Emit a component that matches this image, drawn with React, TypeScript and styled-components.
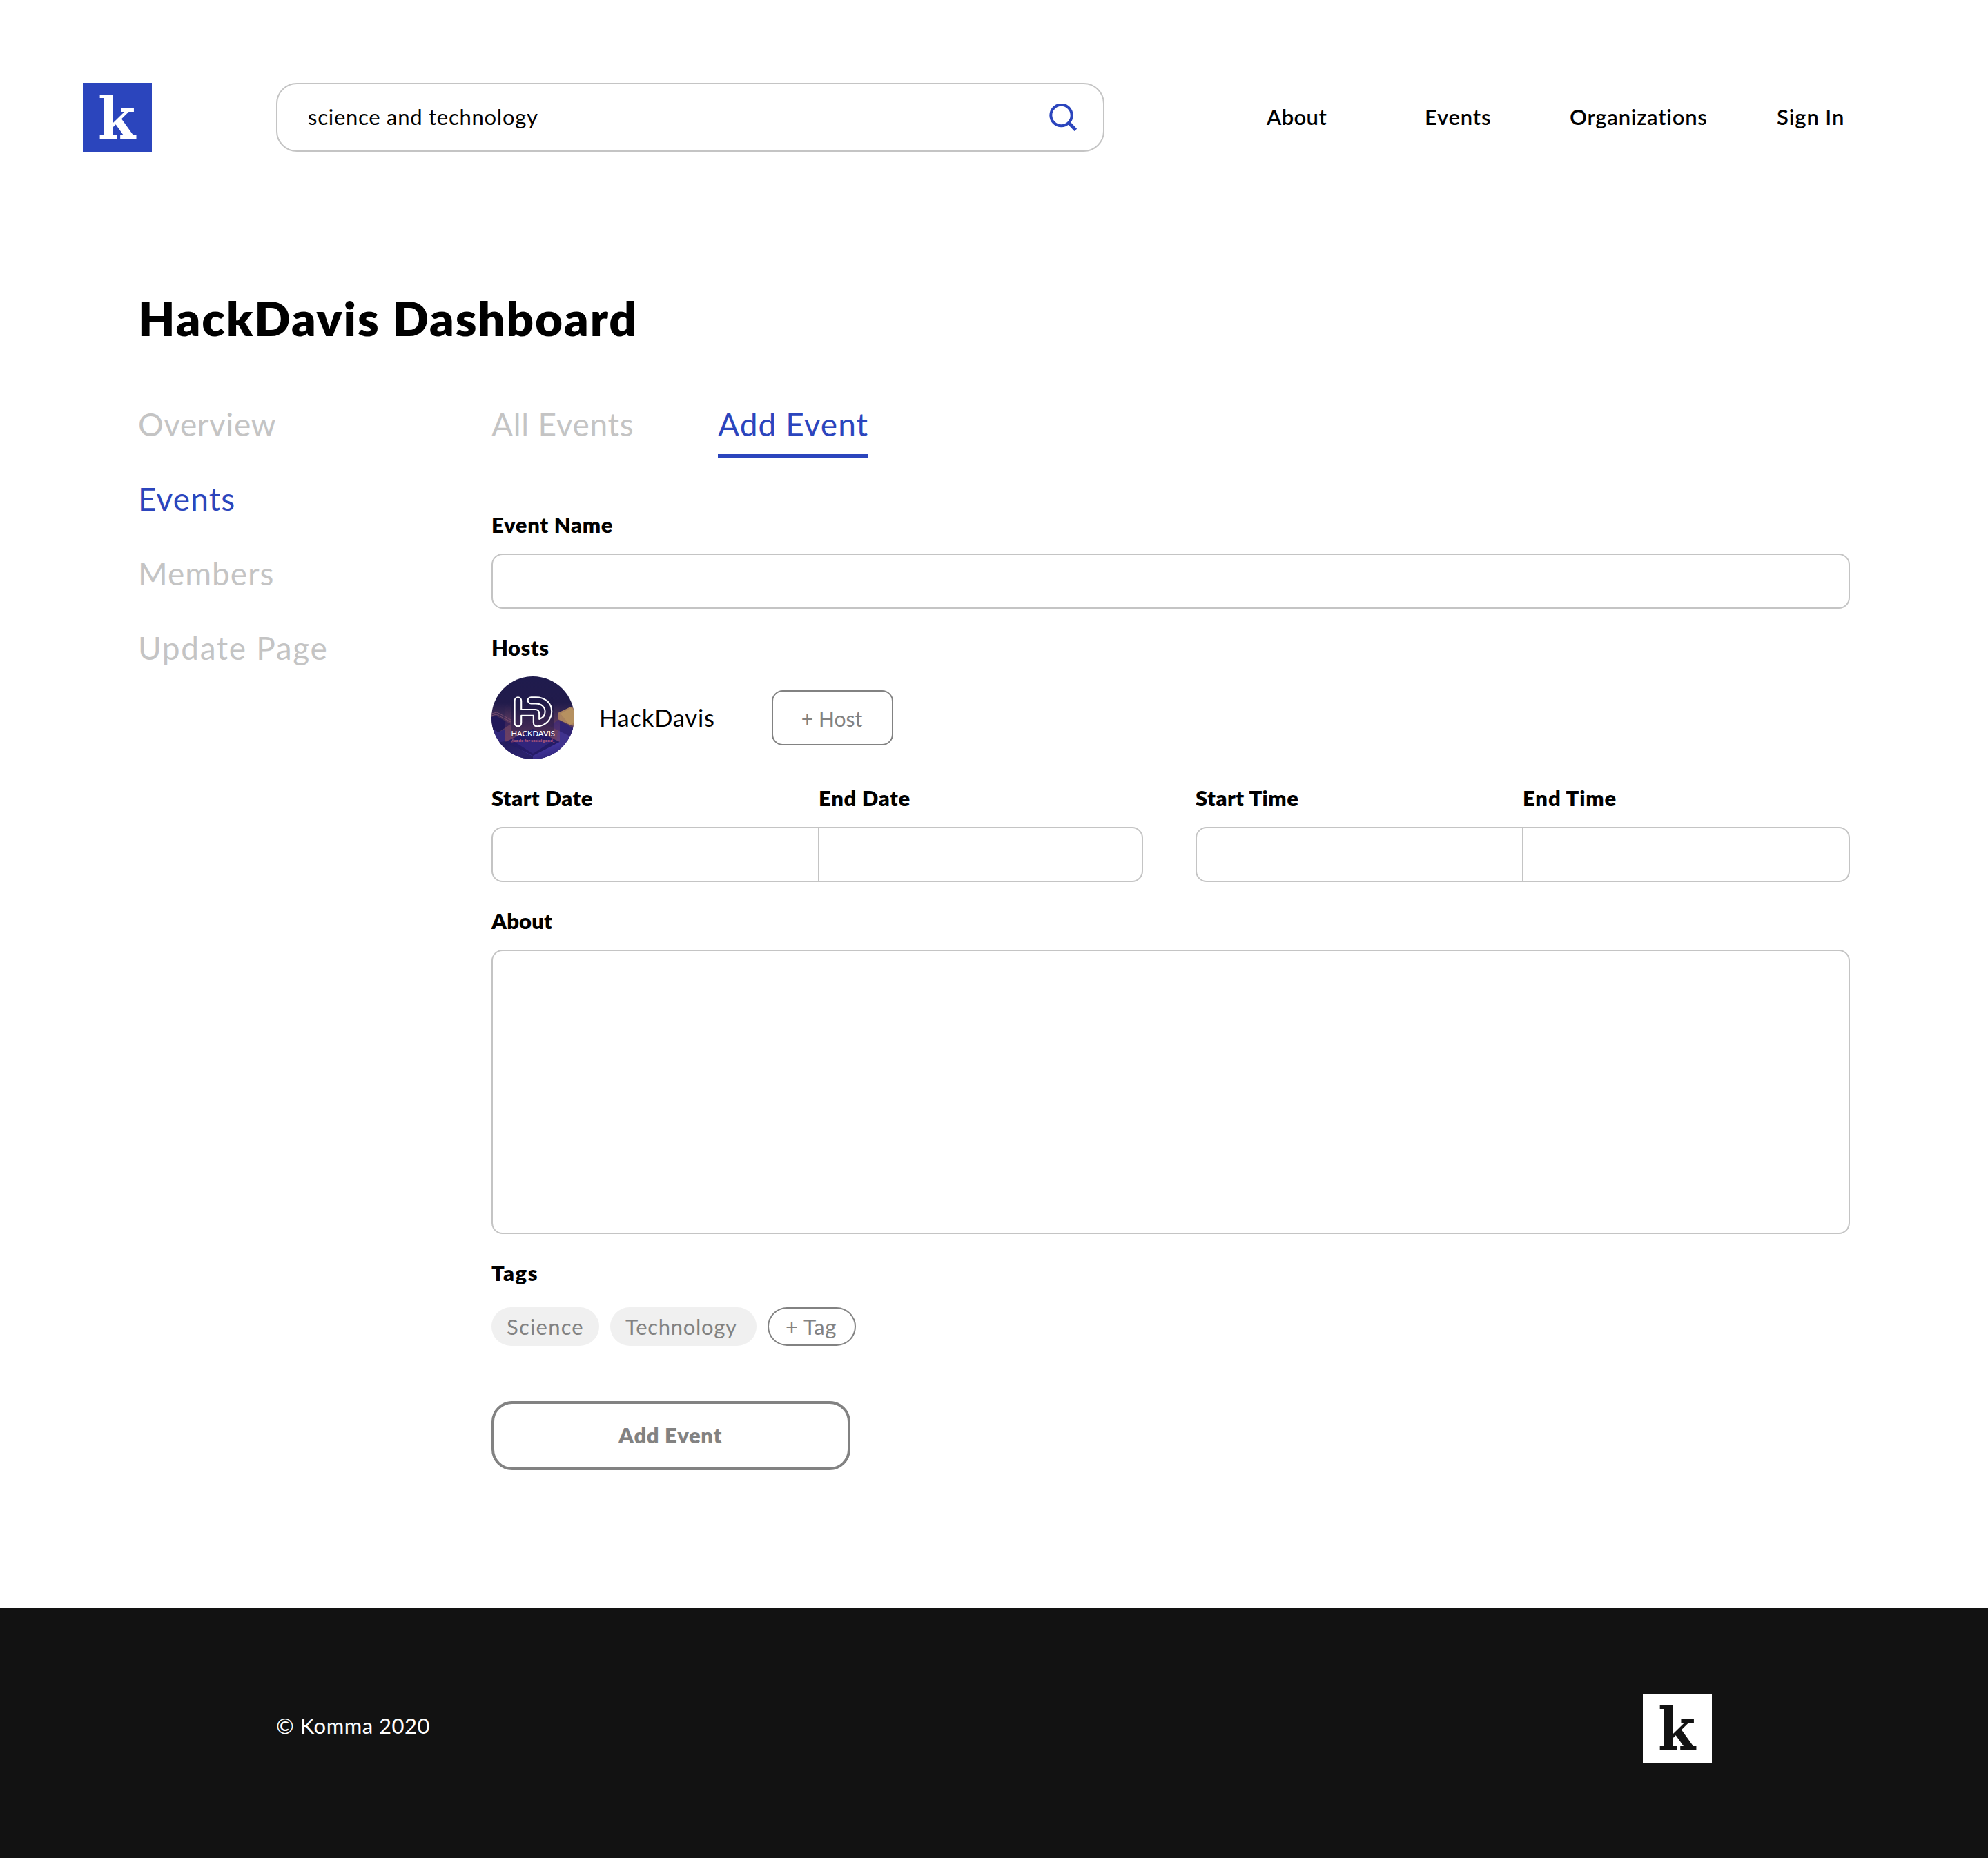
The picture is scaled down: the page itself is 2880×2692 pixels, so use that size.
import React from "react";
import styled, { createGlobalStyle } from "styled-components";

const blue = "#2b45bd";
const line = "#c4c4c4";
const grey = "#828282";

const GlobalStyle = createGlobalStyle`
  * { box-sizing: border-box; }
  body { margin: 0; background: #fff; color: #000; font-family: Lato, "Open Sans", sans-serif; }
  h1, p { margin: 0; }
  button, input, textarea { font: inherit; color: inherit; background: none; margin: 0; outline: none; }
`;

const Page = styled.div`
  width: 2880px;
  min-height: 2692px;
  display: flex;
  flex-direction: column;
`;

const Header = styled.header`
  height: 220px;
  padding: 120px 0 0 120px;
  display: flex;
`;

const LogoTile = styled.div<{ $bg: string; $fg: string }>`
  width: 100px;
  height: 100px;
  padding: 2px 1px 0 0;
  display: flex;
  justify-content: center;
  background: ${(p) => p.$bg};
  color: ${(p) => p.$fg};
  font: 700 84px/100px "DejaVu Serif", serif;
`;

const LogoLetter = styled.span`
  display: block;
  transform: scaleX(0.93);
`;

const SearchBox = styled.div`
  width: 1200px;
  height: 100px;
  margin-left: 180px;
  padding: 0 38px 0 44px;
  display: flex;
  align-items: center;
  justify-content: space-between;
  border: 2px solid ${line};
  border-radius: 30px;
`;

const SearchText = styled.span<{ $ls: number }>`
  font-size: 31px;
  line-height: 40px;
  padding-bottom: 3px;
  letter-spacing: ${(p) => p.$ls}px;
`;

const Nav = styled.nav`
  display: grid;
  grid-template-columns: 229px 210px 300px auto;
  align-items: center;
  margin-left: 235px;
  padding-bottom: 3px;
`;

const NavLink = styled.a<{ $ls: number }>`
  font-size: 31px;
  line-height: 40px;
  font-weight: 600;
  letter-spacing: ${(p) => p.$ls}px;
`;

const Title = styled.h1`
  height: 80px;
  margin: 200px 0 0 200px;
  font-size: 69px;
  line-height: 82px;
  font-weight: 800;
  letter-spacing: 1.9px;
`;

const Body = styled.main`
  display: grid;
  grid-template-columns: 512px 1968px;
  margin: 84px 0 200px 200px;
`;

const SideNav = styled.nav`
  display: flex;
  flex-direction: column;
  align-items: flex-start;
  gap: 48px;
  padding-top: 1px;
`;

const SideLink = styled.a<{ $active?: boolean; $ls: number }>`
  font-size: 46px;
  line-height: 60px;
  color: ${(p) => (p.$active ? blue : line)};
  letter-spacing: ${(p) => p.$ls}px;
`;

const Content = styled.section`
  display: flex;
  flex-direction: column;
  align-items: stretch;
`;

const Tabs = styled.div`
  display: grid;
  grid-template-columns: 328px 218px;
  margin-bottom: 76px;
`;

const Tab = styled.a<{ $active?: boolean; $ls: number }>`
  height: 80px;
  padding-top: 1px;
  font-size: 46px;
  line-height: 60px;
  white-space: nowrap;
  color: ${(p) => (p.$active ? blue : line)};
  border-bottom: 6px solid ${(p) => (p.$active ? blue : "transparent")};
  letter-spacing: ${(p) => p.$ls}px;
`;

const Form = styled.form`
  display: flex;
  flex-direction: column;
  gap: 36px;
`;

const Field = styled.div`
  display: flex;
  flex-direction: column;
`;

const Label = styled.label<{ $ls: number }>`
  display: block;
  height: 40px;
  margin-bottom: 22px;
  font-size: 31px;
  line-height: 40px;
  font-weight: 800;
  letter-spacing: ${(p) => p.$ls}px;
`;

const TextInput = styled.input`
  height: 80px;
  padding: 0 24px;
  border: 2px solid ${line};
  border-radius: 16px;
`;

const TextArea = styled.textarea`
  display: block;
  height: 412px;
  padding: 24px;
  border: 2px solid ${line};
  border-radius: 16px;
  resize: none;
`;

const HostRow = styled.div`
  height: 120px;
  display: flex;
  align-items: center;
`;

const HostName = styled.span<{ $ls: number }>`
  width: 250px;
  margin-left: 36px;
  font-size: 34.5px;
  line-height: 40px;
  letter-spacing: ${(p) => p.$ls}px;
`;

const HostButton = styled.button<{ $ls: number }>`
  width: 176px;
  height: 80px;
  padding: 2px 2px 0 0;
  border: 2px solid ${grey};
  border-radius: 16px;
  color: ${grey};
  font-size: 30px;
  letter-spacing: ${(p) => p.$ls}px;
`;

const RangeRow = styled.div`
  display: flex;
  justify-content: space-between;
`;

const Range = styled.div<{ $width: number }>`
  width: ${(p) => p.$width}px;
  display: grid;
  grid-template-columns: 474px 1fr;
`;

const RangeInput = styled.input<{ $end?: boolean }>`
  width: 100%;
  height: 80px;
  padding: 0 24px;
  border: 2px solid ${line};
  border-right-width: ${(p) => (p.$end ? 2 : 0)}px;
  border-radius: ${(p) => (p.$end ? "0 16px 16px 0" : "16px 0 0 16px")};
`;

const RangeEnd = styled(Field)`
  input { width: calc(100% + 1px); margin-left: -1px; }
`;

const TagRow = styled.div`
  display: flex;
  gap: 16px;
  margin-top: 8px;
`;

const Tag = styled.span<{ $width: number; $pad: number; $ls: number; $outline?: boolean }>`
  width: ${(p) => p.$width}px;
  height: 56px;
  padding-left: ${(p) => p.$pad}px;
  border-radius: 28px;
  background: ${(p) => (p.$outline ? "transparent" : "#f0f0f0")};
  box-shadow: ${(p) => (p.$outline ? `inset 0 0 0 2px ${grey}` : "none")};
  color: ${grey};
  font-size: 31px;
  line-height: 57px;
  white-space: nowrap;
  letter-spacing: ${(p) => p.$ls}px;
`;

const Submit = styled.button<{ $ls: number }>`
  width: 520px;
  height: 100px;
  margin-top: 44px;
  padding: 0 2px 3px 0;
  border: 4px solid ${grey};
  border-radius: 30px;
  color: ${grey};
  font-size: 31px;
  font-weight: 800;
  letter-spacing: ${(p) => p.$ls}px;
`;

const Footer = styled.footer`
  height: 362px;
  padding: 124px 400px 0;
  display: flex;
  justify-content: space-between;
  background: #121212;
  color: #fff;
`;

const Copyright = styled.p<{ $ls: number }>`
  margin-top: 26px;
  font-size: 31px;
  line-height: 40px;
  letter-spacing: ${(p) => p.$ls}px;
`;

const Logo = ({ bg, fg }: { bg: string; fg: string }) => (
  <LogoTile $bg={bg} $fg={fg}>
    <LogoLetter>k</LogoLetter>
  </LogoTile>
);

const SearchIcon = () => (
  <svg width="40" height="40" viewBox="0 0 40 40" fill="none" stroke={blue} strokeWidth="4">
    <circle cx="17.5" cy="17" r="15.2" />
    <path d="M28 27.5 L38.3 38.3" strokeWidth="5" />
  </svg>
);

const Avatar = () => (
  <svg width="120" height="120" viewBox="0 0 120 120">
    <defs>
      <clipPath id="disc"><circle cx="60" cy="60" r="60" /></clipPath>
      <linearGradient id="sky" x1="0" y1="0" x2="0" y2="1">
        <stop offset="0" stopColor="#1f1b4d" />
        <stop offset=".32" stopColor="#211b4b" />
        <stop offset=".62" stopColor="#573a60" />
        <stop offset=".8" stopColor="#4d3468" />
        <stop offset="1" stopColor="#2a2066" />
      </linearGradient>
      <linearGradient id="glow" x1="0" y1="0" x2="0" y2="1">
        <stop offset="0" stopColor="#8b4a65" stopOpacity="0" />
        <stop offset="1" stopColor="#8b4a65" stopOpacity=".5" />
      </linearGradient>
      <linearGradient id="panel" x1="0" y1="0" x2="0" y2="1">
        <stop offset="0" stopColor="#1d1846" stopOpacity="0" />
        <stop offset=".3" stopColor="#1d1846" stopOpacity=".7" />
        <stop offset=".7" stopColor="#33204f" stopOpacity=".8" />
        <stop offset="1" stopColor="#54365a" />
      </linearGradient>
      <linearGradient id="cube" x1="0" y1="0" x2="1" y2="1">
        <stop offset="0" stopColor="#2b2071" />
        <stop offset=".5" stopColor="#4336a0" />
        <stop offset="1" stopColor="#2c2270" />
      </linearGradient>
    </defs>
    <g clipPath="url(#disc)">
      <rect width="120" height="120" fill="url(#sky)" />
      <path d="M0 54l8-2 20 11M0 57l7-2 21 11" stroke="#8c5a78" strokeWidth=".7" fill="none" />
      <path d="M0 59l6-2 22 12-18 12-10-5z" fill="#211858" />
      <path d="M0 75l10 6 10-5v44H0z" fill="#32287c" />
      <path d="M98 68l22 8v44H90z" fill="#40338e" />
      <path d="M84 72l13-9 23 13v14z" fill="#302474" />
      <path d="M96 53l19-9 6 3v25l-6-1-19-9z" fill="#a9825f" />
      <path d="M100 54l15-8 6 3v18l-8 3z" fill="#bd9961" opacity=".65" />
      <rect x="20" y="42" width="79" height="53" fill="url(#glow)" />
      <rect x="28" y="28" width="62" height="60" fill="url(#panel)" />
      <path d="M60 76l39 19-39 21-40-21z" fill="#241b66" />
      <path d="M20 95l40 20 39-20v25H20z" fill="url(#cube)" />
      <path d="M29 92h62l-31 20z" fill="#382a86" opacity=".7" />
      <path d="M0 97l20-3 40 22v4H0z" fill="#201955" opacity=".7" />
      <path
        d="M43.2 56.8H60.8V66.5Q60.8 72.4 66.5 72.4C79 71.5 87.2 62 87.2 50.5C87.2 38 77 30.2 64.5 30.2H57.3A4.5 4.5 0 0 0 57.3 39.4H64C72.5 39.4 77.6 44.5 77.6 51C77.6 56.5 74 60.5 69.2 62V54Q69.2 48 63.2 48H43.2V35.2A4.8 4.8 0 0 0 33.6 35.2V67.6A4.8 4.8 0 0 0 43.2 67.6Z"
        fill="none" stroke="#fff" strokeWidth="2.1" strokeLinejoin="round"
      />
      <text x="28.5" y="86.8" fontFamily="Lato, sans-serif" fontSize="10.6" fill="#fff" textLength="63.5" lengthAdjust="spacingAndGlyphs">
        HACK<tspan fontWeight="600">DAVIS</tspan>
      </text>
      <text x="28.5" y="94.8" fontFamily="Lato, sans-serif" fontSize="6" fontWeight="700" fill="#c25f76" textLength="63" lengthAdjust="spacingAndGlyphs">
        //code for social good_
      </text>
    </g>
  </svg>
);

export default function App() {
  return (
    <Page>
      <GlobalStyle />
      <Header>
        <Logo bg={blue} fg="#fff" />
        <SearchBox>
          <SearchText $ls={0.74}>science and technology</SearchText>
          <SearchIcon />
        </SearchBox>
        <Nav>
          <NavLink $ls={0.4}>About</NavLink>
          <NavLink $ls={0.8}>Events</NavLink>
          <NavLink $ls={0.75}>Organizations</NavLink>
          <NavLink $ls={0.9}>Sign In</NavLink>
        </Nav>
      </Header>
      <Title>HackDavis Dashboard</Title>
      <Body>
        <SideNav>
          <SideLink $ls={0.55}>Overview</SideLink>
          <SideLink $ls={1.1} $active>Events</SideLink>
          <SideLink $ls={0.95}>Members</SideLink>
          <SideLink $ls={1.65}>Update Page</SideLink>
        </SideNav>
        <Content>
          <Tabs>
            <Tab $ls={0.72}>All Events</Tab>
            <Tab $ls={1.05} $active>Add Event</Tab>
          </Tabs>
          <Form>
            <Field>
              <Label $ls={0.65}>Event Name</Label>
              <TextInput />
            </Field>
            <Field>
              <Label $ls={0.45}>Hosts</Label>
              <HostRow>
                <Avatar />
                <HostName $ls={0.8}>HackDavis</HostName>
                <HostButton type="button" $ls={0}>+ Host</HostButton>
              </HostRow>
            </Field>
            <RangeRow>
              <Range $width={944}>
                <Field><Label $ls={0.4}>Start Date</Label><RangeInput /></Field>
                <RangeEnd><Label $ls={0.65}>End Date</Label><RangeInput $end /></RangeEnd>
              </Range>
              <Range $width={948}>
                <Field><Label $ls={0.5}>Start Time</Label><RangeInput /></Field>
                <RangeEnd><Label $ls={0.85}>End Time</Label><RangeInput $end /></RangeEnd>
              </Range>
            </RangeRow>
            <Field>
              <Label $ls={0.1}>About</Label>
              <TextArea />
            </Field>
            <Field>
              <Label $ls={1.5}>Tags</Label>
              <TagRow>
                <Tag $width={156} $pad={22} $ls={1.2}>Science</Tag>
                <Tag $width={212} $pad={22} $ls={0.7}>Technology</Tag>
                <Tag $width={128} $pad={26} $ls={0.5} $outline>+ Tag</Tag>
              </TagRow>
            </Field>
            <Submit type="button" $ls={0.65}>Add Event</Submit>
          </Form>
        </Content>
      </Body>
      <Footer>
        <Copyright $ls={0.5}>© Komma 2020</Copyright>
        <Logo bg="#fff" fg="#121212" />
      </Footer>
    </Page>
  );
}
